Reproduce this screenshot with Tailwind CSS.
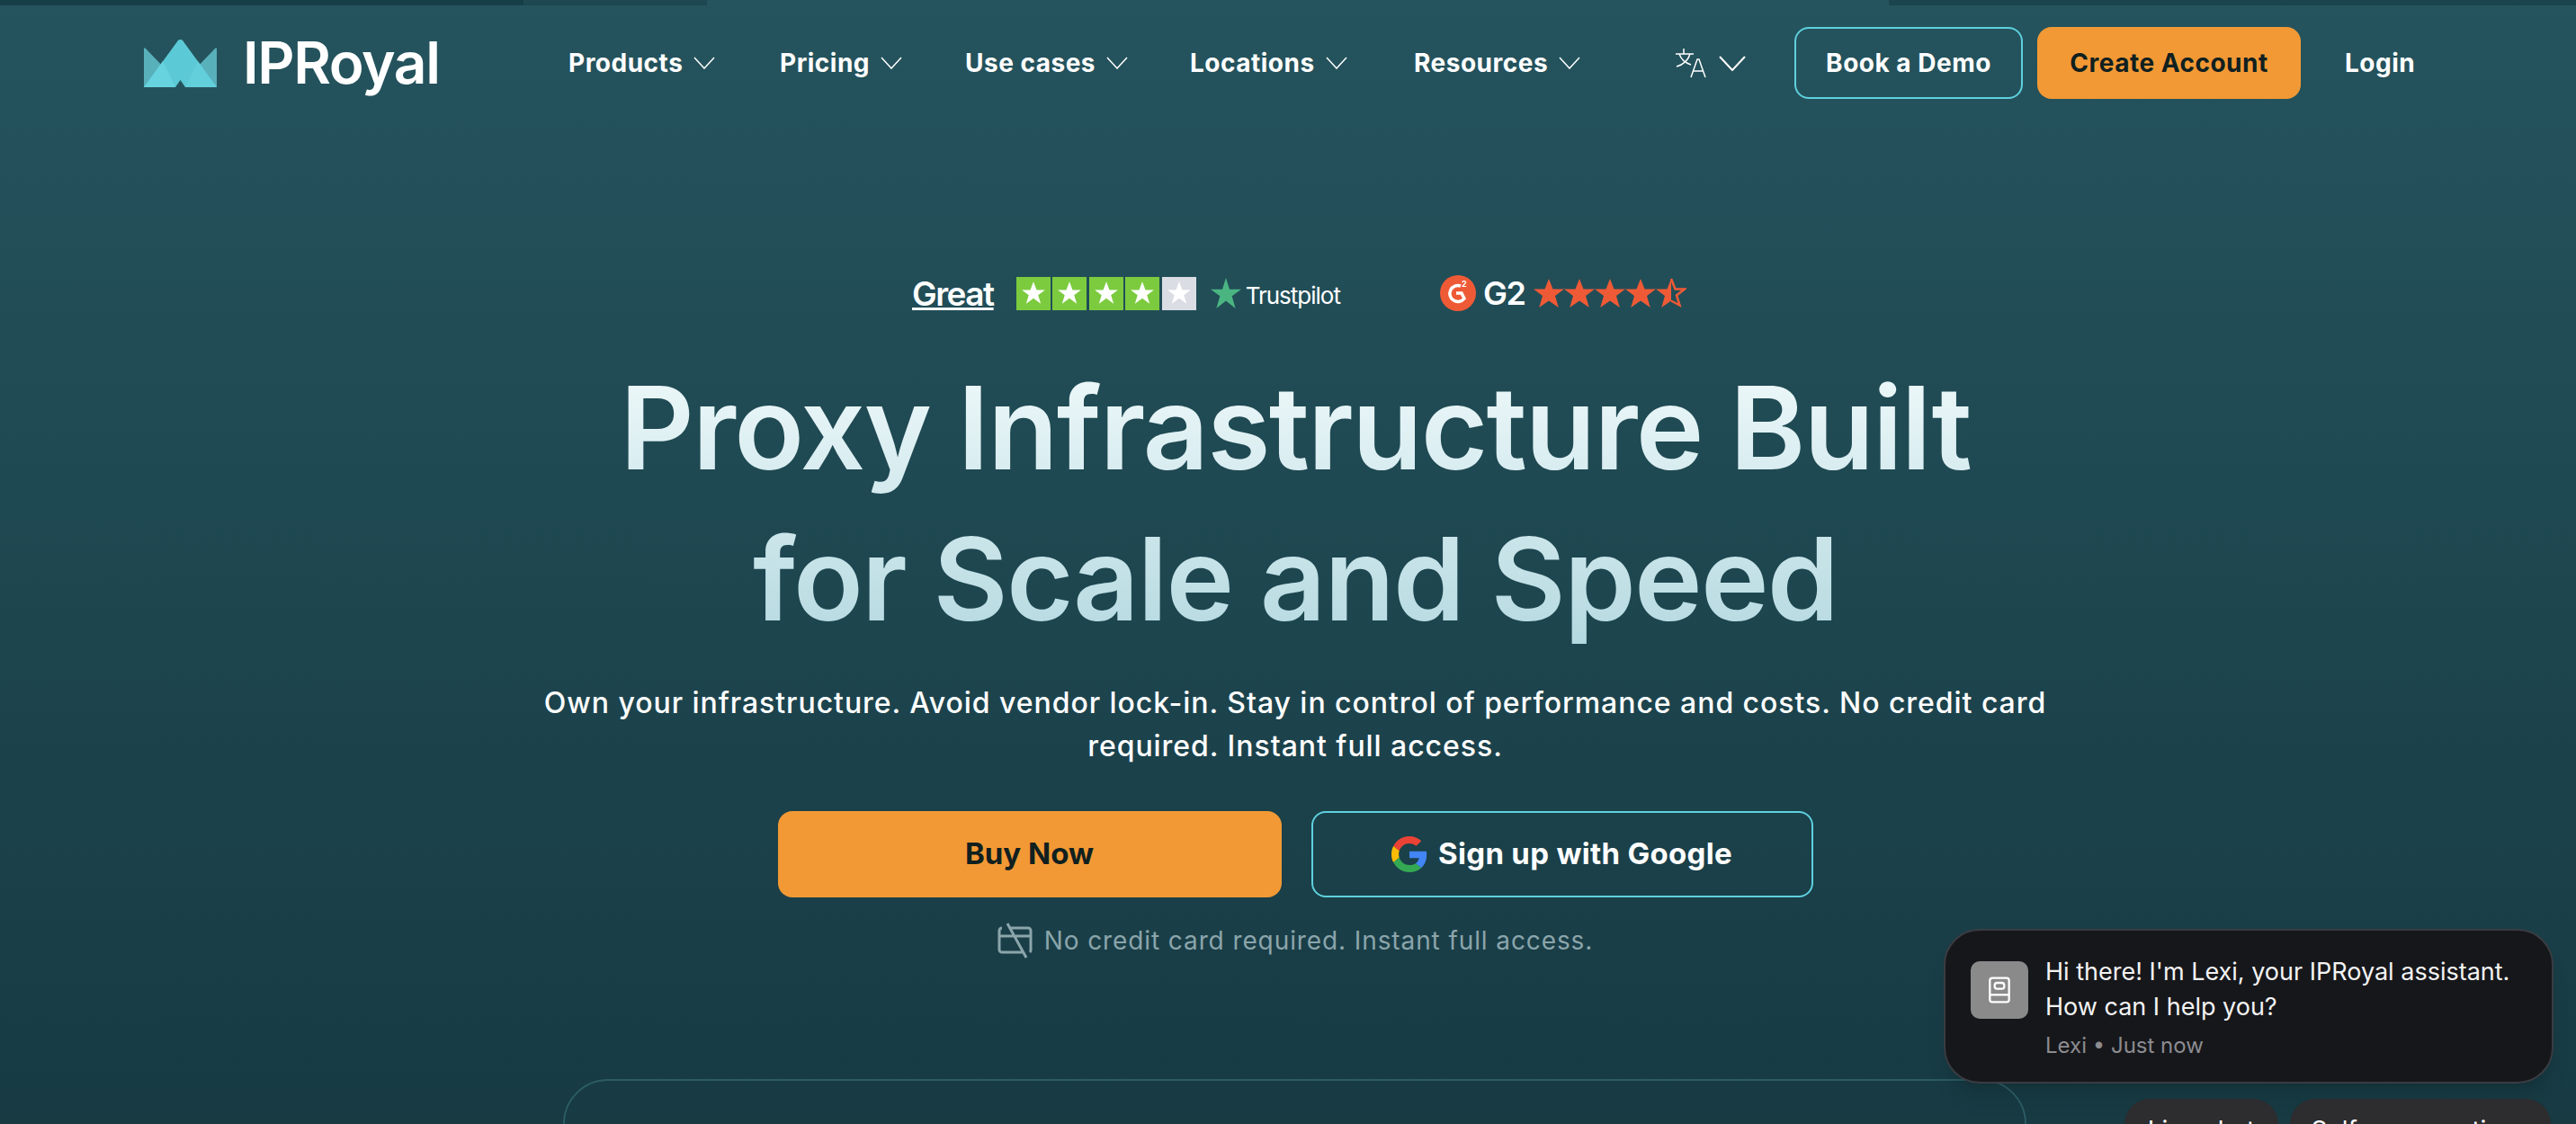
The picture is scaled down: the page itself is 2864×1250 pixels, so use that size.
<!DOCTYPE html>
<html lang="en">
<head>
    <meta charset="UTF-8">
    <meta name="viewport" content="width=device-width, initial-scale=1.0">
    <title>IPRoyal</title>
    <script src="https://cdn.jsdelivr.net/npm/@tailwindcss/browser@4"></script>
</head>
<body class="relative h-[1250px] w-[2864px] overflow-hidden bg-gradient-to-b from-[#25545e] to-[#173a43] font-['Inter',sans-serif] text-white">
    <!-- top loading strip -->
    <div class="flex h-[6px]">
        <div class="w-[582px] bg-[#163e47]"></div>
        <div class="w-[204px] bg-[#1d4851]"></div>
        <div class="w-[1314px]"></div>
        <div class="flex-1 bg-[#1b454e]"></div>
    </div>

    <!-- nav -->
    <nav class="flex h-[80px] mt-[24px] items-center pl-[160px]">
        <a href="#" class="flex items-center w-[472px]">
            <svg class="w-[81px] h-[53px]" viewBox="0 0 81 53">
                <path d="M0 10 L1 9 L27 36 L17 53 L0 53Z" fill="#58b0ba"/>
                <path d="M81 10 L80 9 L54 36 L64 53 L81 53Z" fill="#58b0ba"/>
                <path d="M40.500 0 C38.500 0 37.500 1 36.500 3 L0 53 L35 53 L40.500 45 L46 53 L81 53 L44.500 3 C43.500 1 42.500 0 40.500 0Z" fill="#5cc9d6"/>
                <path d="M0 53 L21 24 L35 53Z" fill="#66d3df"/>
                <path d="M81 53 L60 24 L46 53Z" fill="#62cfdb"/>
            </svg>
            <span class="ml-[29px] text-[64px] font-semibold tracking-[-1.4px] leading-none">IPRoyal</span>
        </a>
        <div class="flex items-center text-[28px] font-bold tracking-[0.5px]">
            <a href="#" class="flex items-center w-[235px]">Products<svg class="ml-[12px] w-[24px] h-[14px]" viewBox="0 0 24 14" fill="none" stroke="white" stroke-width="1.5"><path d="M1 1l11 12L23 1"/></svg></a>
            <a href="#" class="flex items-center w-[206px]">Pricing<svg class="ml-[12px] w-[24px] h-[14px]" viewBox="0 0 24 14" fill="none" stroke="white" stroke-width="1.5"><path d="M1 1l11 12L23 1"/></svg></a>
            <a href="#" class="flex items-center w-[250px]">Use cases<svg class="ml-[12px] w-[24px] h-[14px]" viewBox="0 0 24 14" fill="none" stroke="white" stroke-width="1.5"><path d="M1 1l11 12L23 1"/></svg></a>
            <a href="#" class="flex items-center w-[249px]">Locations<svg class="ml-[12px] w-[24px] h-[14px]" viewBox="0 0 24 14" fill="none" stroke="white" stroke-width="1.5"><path d="M1 1l11 12L23 1"/></svg></a>
            <a href="#" class="flex items-center w-[290px]">Resources<svg class="ml-[12px] w-[24px] h-[14px]" viewBox="0 0 24 14" fill="none" stroke="white" stroke-width="1.5"><path d="M1 1l11 12L23 1"/></svg></a>
        </div>
        <div class="flex items-center w-[133px]">
            <svg class="w-[36px] h-[36px]" viewBox="0 0 36 36" fill="none" stroke="white" stroke-width="1.5"><path d="M1 8h20M10 2v6M17 8c-2 7-8 12-15 14M5 8c2 6 7 10 13 12M18 34l7-20h2l7 20M21 27h11"/></svg>
            <svg class="ml-[13px] w-[30px] h-[17px]" viewBox="0 0 30 17" fill="none" stroke="white" stroke-width="2"><path d="M1 1l14 15L29 1"/></svg>
        </div>
        <a href="#" class="flex h-[80px] w-[254px] items-center justify-center rounded-[16px] border-2 border-[#5fd0de] text-[28px] font-bold tracking-[0.5px]">Book a Demo</a>
        <a href="#" class="ml-[16px] flex h-[80px] w-[293px] items-center justify-center rounded-[16px] bg-[#f29935] text-[28px] font-bold tracking-[0.5px] text-[#10201f]">Create Account</a>
        <a href="#" class="ml-[49px] text-[28px] font-bold tracking-[0.5px]">Login</a>
    </nav>

    <!-- hero -->
    <main class="flex flex-col items-center pl-[16px]">
        <div class="mt-[196px] ml-[998px] flex h-[40px] items-center self-start">
            <a href="#" class="text-[37px] font-semibold tracking-[-1.5px] underline leading-none">Great</a>
            <div class="ml-[25px] flex gap-[2.5px]">
                <span class="flex h-[37px] w-[38px] items-center justify-center bg-[#7ccb3f]"><svg class="w-[28px] h-[28px]" viewBox="0 0 24 24" fill="white"><path d="M12 1l3 8h8l-6.500 5 2.500 8-7-5-7 5 2.500-8L1 9h8z"/></svg></span>
                <span class="flex h-[37px] w-[38px] items-center justify-center bg-[#7ccb3f]"><svg class="w-[28px] h-[28px]" viewBox="0 0 24 24" fill="white"><path d="M12 1l3 8h8l-6.500 5 2.500 8-7-5-7 5 2.500-8L1 9h8z"/></svg></span>
                <span class="flex h-[37px] w-[38px] items-center justify-center bg-[#7ccb3f]"><svg class="w-[28px] h-[28px]" viewBox="0 0 24 24" fill="white"><path d="M12 1l3 8h8l-6.500 5 2.500 8-7-5-7 5 2.500-8L1 9h8z"/></svg></span>
                <span class="flex h-[37px] w-[38px] items-center justify-center bg-[#7ccb3f]"><svg class="w-[28px] h-[28px]" viewBox="0 0 24 24" fill="white"><path d="M12 1l3 8h8l-6.500 5 2.500 8-7-5-7 5 2.500-8L1 9h8z"/></svg></span>
                <span class="flex h-[37px] w-[38px] items-center justify-center bg-[#dadde4]"><svg class="w-[28px] h-[28px]" viewBox="0 0 24 24" fill="white"><path d="M12 1l3 8h8l-6.500 5 2.500 8-7-5-7 5 2.500-8L1 9h8z"/></svg></span>
            </div>
            <svg class="ml-[16px] w-[34px] h-[34px]" viewBox="0 0 24 24" fill="#4bb582"><path d="M12 0l2.800 9H24l-7.300 5.300L19.500 24 12 18l-7.500 6 2.800-9.700L0 9h9.200z"/></svg>
            <span class="ml-[5px] text-[26px] tracking-[-1px] mt-[4px]">Trustpilot</span>
            <span class="ml-[111px] flex h-[40px] w-[40px] items-center justify-center rounded-full bg-[#ef5a36]">
                <svg class="w-[32px] h-[32px]" viewBox="0 0 32 32" fill="none" stroke="white" stroke-width="3.500">
                    <path d="M19 8a9 9 0 1 0 4 14l-3-6h-6"/>
                    <text x="20" y="9" fill="white" stroke="none" font-size="9" font-weight="700">2</text>
                </svg>
            </span>
            <span class="ml-[8px] text-[36px] font-semibold tracking-[-1.5px] leading-none">G2</span>
            <svg class="ml-[10px] w-[170px] h-[34px]" viewBox="0 0 170 34">
                <path fill="#ef5a36" d="M17 1l4.500 11.500H34l-10 7.500 3.800 13L17 25.500 6.200 33 10 20 0 12.500h12.500z"/>
                <path fill="#ef5a36" transform="translate(34)" d="M17 1l4.500 11.500H34l-10 7.500 3.800 13L17 25.500 6.200 33 10 20 0 12.500h12.500z"/>
                <path fill="#ef5a36" transform="translate(68)" d="M17 1l4.500 11.500H34l-10 7.500 3.800 13L17 25.500 6.200 33 10 20 0 12.500h12.500z"/>
                <path fill="#ef5a36" transform="translate(102)" d="M17 1l4.500 11.500H34l-10 7.500 3.800 13L17 25.500 6.200 33 10 20 0 12.500h12.500z"/>
                <path fill="#ef5a36" transform="translate(136)" d="M17 1V25.500L6.200 33 10 20 0 12.500h12.500z"/>
                <path fill="none" stroke="#ef5a36" stroke-width="2.500" transform="translate(136)" d="M17 1l4.500 11.500H32l-9 7 3.500 11L17 25.500"/>
            </svg>
        </div>

        <h1 class="mt-[46px] bg-gradient-to-b from-[#f1fafb] to-[#b2d8df] bg-clip-text text-center text-[128px] font-semibold tracking-[-1.8px] leading-[168px] text-transparent">Proxy Infrastructure Built<br>for Scale and Speed</h1>

        <p class="mt-[30px] w-[1700px] text-center text-[32px] font-medium leading-[48px] tracking-[0.95px]">Own your infrastructure. Avoid vendor lock-in. Stay in control of performance and costs. No credit card required. Instant full access.</p>

        <div class="mt-[48px] flex gap-[33px]">
            <a href="#" class="flex h-[96px] w-[560px] items-center justify-center rounded-[16px] bg-[#f29935] text-[33px] font-bold text-[#10201f]">Buy Now</a>
            <a href="#" class="flex h-[96px] w-[558px] items-center justify-center rounded-[16px] border-2 border-[#5fd0de] text-[33px] font-bold tracking-[0.3px]">
                <svg class="mr-[12px] w-[40px] h-[40px]" viewBox="0 0 48 48">
                    <path fill="#ea4335" d="M24 9.500c3.500 0 6.700 1.300 9.100 3.500l6.800-6.800C35.800 2.400 30.200 0 24 0 14.600 0 6.500 5.400 2.600 13.200l7.900 6.200C12.400 13.700 17.700 9.500 24 9.500z"/>
                    <path fill="#4285f4" d="M47 24.500c0-1.600-.1-3.100-.4-4.500H24v9h12.900c-.6 3-2.200 5.500-4.700 7.200l7.700 6c4.500-4.200 7.100-10.300 7.100-17.700z"/>
                    <path fill="#fbbc05" d="M10.500 28.600c-.5-1.500-.8-3-.8-4.600s.3-3.200.8-4.600l-7.900-6.200C.9 16.500 0 20.100 0 24s.9 7.500 2.600 10.800z"/>
                    <path fill="#34a853" d="M24 48c6.500 0 11.900-2.100 15.900-5.800l-7.700-6c-2.200 1.400-4.900 2.300-8.200 2.300-6.300 0-11.600-4.200-13.500-9.900l-7.900 6.200C6.500 42.600 14.600 48 24 48z"/>
                </svg>
                Sign up with Google
            </a>
        </div>

        <div class="mt-[27px] flex items-center text-[28px] tracking-[0.9px] text-[#8ba5ab]">
            <svg class="mr-[12px] w-[40px] h-[40px]" viewBox="0 0 40 40" fill="none" stroke="#8ba5ab" stroke-width="3"><path d="M14 6h20a3 3 0 0 1 3 3v22a3 3 0 0 1-1 2M29 33H5a3 3 0 0 1-3-3V9a3 3 0 0 1 3-3M2 15h35M11 1l21 38"/></svg>
            No credit card required. Instant full access.
        </div>

        <!-- panel below the fold -->
        <div class="absolute left-[626px] top-[1200px] h-[200px] w-[1627px] rounded-[50px] border-2 border-[#2c5c63]"></div>
    </main>

    <!-- chat widget -->
    <div class="absolute left-[2161px] top-[1033px] flex h-[172px] w-[678px] rounded-[40px] border-2 border-[#3a3c42] bg-[#16171b] pl-[28px] pt-[34px] shadow-xl">
        <div class="flex h-[64px] w-[64px] shrink-0 items-center justify-center rounded-[10px] bg-[#8a8a8a]">
            <svg class="w-[32px] h-[32px]" viewBox="0 0 24 24" fill="none" stroke="white" stroke-width="1.700"><rect x="4" y="2" width="16" height="20" rx="2"/><rect x="8" y="6" width="8" height="5" rx="2"/><path d="M4 16h16"/></svg>
        </div>
        <div class="ml-[19px]">
            <p class="text-[27px] leading-[39px] text-[#f3f3f3] mt-[-8px]">Hi there! I'm Lexi, your IPRoyal assistant.<br>How can I help you?</p>
            <p class="mt-[8px] text-[24px] leading-[32px] text-[#8c8c90]">Lexi • Just now</p>
        </div>
    </div>
    <div class="absolute left-[2362px] top-[1222px] flex h-[60px] w-[171px] justify-center rounded-[28px] bg-[#2d2c2f] pt-[21px] text-[28px] leading-none">Live chat</div>
    <div class="absolute left-[2546px] top-[1222px] flex h-[60px] w-[290px] justify-center rounded-[28px] bg-[#2d2c2f] pt-[21px] text-[28px] leading-none">Self-serve options</div>
</body>
</html>
